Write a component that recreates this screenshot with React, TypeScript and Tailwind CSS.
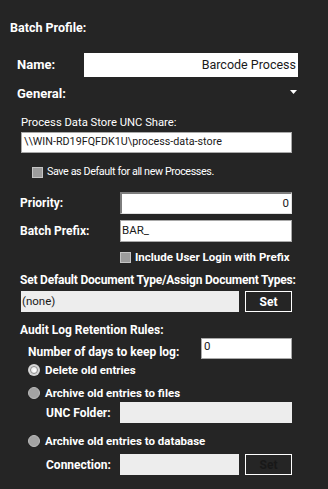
import React from "react";

const font = { fontFamily: 'Roboto, Lato, Arial, sans-serif' };

function Box({ className, children }: { className: string; children?: React.ReactNode }) {
  return <div className={`flex items-center text-[11.5px] text-[#1a1a1a] whitespace-nowrap ${className}`}>{children}</div>;
}

function Check({ label, bold }: { label: string; bold?: boolean }) {
  return (
    <div className="flex items-center h-[16px]">
      <span className="w-[11px] h-[11px] bg-[#9c9c9c] border border-[#c4c4c4] shrink-0" />
      <span
        className={`ml-[4px] leading-[16px] whitespace-nowrap ${
          bold ? "font-bold text-[11.5px]" : "text-[10.75px] tracking-[-0.4px]"
        }`}
      >
        {label}
      </span>
    </div>
  );
}

function Radio({ label, selected }: { label: string; selected?: boolean }) {
  return (
    <div className="flex items-center h-[16px] pl-[28px]">
      {selected ? (
        <span className="w-[12px] h-[12px] rounded-full bg-[#d6d6d6] flex items-center justify-center shrink-0">
          <span className="w-[8px] h-[8px] rounded-full border border-[#8c8c8c] bg-[#f2f2f2] flex items-center justify-center">
            <span className="w-[3px] h-[3px] rounded-full bg-[#ffffff]" />
          </span>
        </span>
      ) : (
        <span className="w-[12px] h-[12px] rounded-full bg-[#a3a3a3] border border-[#bcbcbc] shrink-0" />
      )}
      <span className="ml-[5px] text-[11.5px] font-bold leading-[16px] whitespace-nowrap">{label}</span>
    </div>
  );
}

export default function App() {
  return (
    <div className="w-[328px] h-[489px] bg-[#252525] text-white overflow-hidden" style={font}>
      <div className="pt-[20px] pl-[10px] text-[12.5px] font-bold leading-[16px]">Batch Profile:</div>

      {/* Name */}
      <div className="mt-[17px] flex items-center h-[24px]">
        <div className="pl-[17px] w-[84px] text-[13px] font-bold">Name:</div>
        <Box className="w-[214px] h-[24px] bg-white justify-end pr-[2px] !text-[12.5px]">Barcode Process</Box>
      </div>

      {/* General */}
      <div className="mt-[9px] flex items-center h-[16px] pl-[17px] pr-[31px] justify-between">
        <span className="text-[13px] font-bold leading-[16px]">General:</span>
        <svg width="7" height="4" viewBox="0 0 7 4" className="-mt-[5px]">
          <path d="M0 0 L7 0 L3.5 4 Z" fill="#ffffff" />
        </svg>
      </div>

      <div className="mt-[13px] pl-[21px] text-[11.25px] leading-[16px]">Process Data Store UNC Share:</div>
      <div className="mt-[1px] pl-[21px]">
        <Box className="w-[271px] h-[21px] bg-white border border-[#a9a9a9] pl-[2px] !text-[10.75px]">\\WIN-RD19FQFDK1U\process-data-store</Box>
      </div>

      <div className="mt-[11px] pl-[32px]">
        <Check label="Save as Default for all new Processes." />
      </div>

      {/* Priority */}
      <div className="mt-[12px] flex items-center h-[22px]">
        <div className="pl-[20px] w-[120px] text-[12px] font-bold">Priority:</div>
        <Box className="w-[172px] h-[22px] bg-white border-t-2 border-l-2 border-[#7d7d7d] border-r border-b border-r-[#e0e0e0] border-b-[#e0e0e0] justify-end pr-[2px]">0</Box>
      </div>

      {/* Batch prefix */}
      <div className="mt-[6px] flex items-center h-[22px]">
        <div className="pl-[20px] w-[120px] text-[12px] font-bold">Batch Prefix:</div>
        <Box className="w-[172px] h-[22px] bg-white border border-[#a9a9a9] pl-[1px]">BAR_</Box>
      </div>

      <div className="mt-[7px] pl-[120px]">
        <Check label="Include User Login with Prefix" bold />
      </div>

      <div className="mt-[7px] pl-[20px] text-[12px] font-bold leading-[16px] whitespace-nowrap tracking-[-0.2px]">
        Set Default Document Type/Assign Document Types:
      </div>
      <div className="mt-[3px] pl-[21px] flex h-[21px] gap-[6px]">
        <Box className="w-[218px] h-[21px] bg-[#ededed] pl-[1px]">(none)</Box>
        <div className="w-[47px] h-[21px] border border-white flex items-center justify-center text-[12px] font-bold">Set</div>
      </div>

      {/* Audit log */}
      <div className="mt-[11px] pl-[20px] text-[12px] font-bold leading-[15px]">Audit Log Retention Rules:</div>
      <div className="flex h-[21px]">
        <div className="pl-[28px] w-[201px] pt-[6px] text-[12px] font-bold leading-[16px] whitespace-nowrap">
          Number of days to keep log:
        </div>
        <div className="w-[91px] h-[21px] bg-white border border-[#a9a9a9] pl-[2px] text-[11.5px] leading-[14px] text-[#1a1a1a]">0</div>
      </div>

      <div className="mt-[3px]">
        <Radio label="Delete old entries" selected />
      </div>
      <div className="mt-[7px]">
        <Radio label="Archive old entries to files" />
      </div>
      <div className="mt-[1px] flex items-center h-[21px]">
        <div className="pl-[46px] w-[120px] text-[12px] font-bold">UNC Folder:</div>
        <div className="w-[172px] h-[21px] bg-[#ededed]" />
      </div>
      <div className="mt-[10px]">
        <Radio label="Archive old entries to database" />
      </div>
      <div className="mt-[5px] flex items-center h-[21px]">
        <div className="pl-[46px] w-[120px] text-[12px] font-bold">Connection:</div>
        <div className="w-[119px] h-[21px] bg-[#ededed]" />
        <div className="ml-[6px] w-[47px] h-[21px] border border-white flex items-center justify-center text-[12px] font-bold text-[#181818]">
          Set
        </div>
      </div>
    </div>
  );
}
